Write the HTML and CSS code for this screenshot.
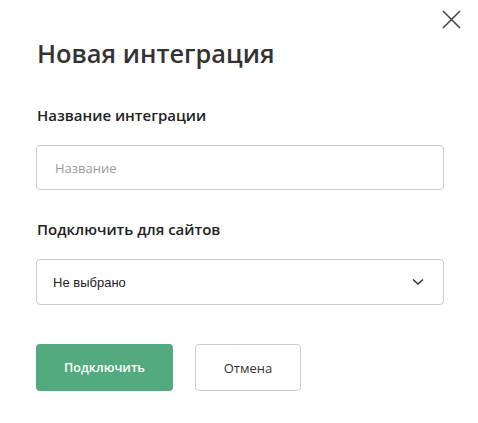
FILE: index.html
```html
<!DOCTYPE html>
<html lang="ru">
<head>
    <meta charset="UTF-8">
    <meta name="viewport" content="width=device-width, initial-scale=1.0">
    <title>Новая интеграция</title>
    <link rel="stylesheet" href="styles.css">
</head>
<body>
    <div class="modal">
        <button class="modal-close" title="Закрыть">
            <svg width="19" height="19" viewBox="0 0 19 19">
                <path d="M1 1L18 18M18 1L1 18" stroke="#444" stroke-width="1.6" fill="none"/>
            </svg>
        </button>
        <h1 class="modal-title">Новая интеграция</h1>

        <div class="field">
            <label class="field-label" for="name">Название интеграции</label>
            <input class="field-input" id="name" type="text" placeholder="Название">
        </div>

        <div class="field">
            <label class="field-label">Подключить для сайтов</label>
            <div class="select">
                <span class="select-value">Не выбрано</span>
                <svg width="12" height="8" viewBox="0 0 12 8">
                    <path d="M1 1.5L6 6L11 1.5" stroke="#333" stroke-width="1.6" fill="none"/>
                </svg>
            </div>
        </div>

        <div class="actions">
            <button class="btn btn-primary">Подключить</button>
            <button class="btn btn-secondary">Отмена</button>
        </div>
    </div>
</body>
</html>
```

FILE: styles.css
```css
body {
    margin: 0;
    padding: 0;
    background-color: #fff;
    font-family: "Open Sans", Arial, sans-serif;
    color: #222;
}

.modal {
    position: relative;
    width: 408px;
    padding: 37px 34px 0 36px;
}

.modal-close {
    position: absolute;
    top: 10px;
    right: 17px;
    background: none;
    border: none;
    padding: 0;
    cursor: pointer;
    line-height: 0;
}

.modal-title {
    margin: 0 0 36px 1px;
    font-size: 25.4px;
    line-height: 32px;
    font-weight: 600;
    color: #333;
}

.field {
    display: flex;
    flex-direction: column;
    margin-bottom: 29px;
}

.field-label {
    margin-left: 1px;
    margin-bottom: 20px;
    font-size: 15px;
    line-height: 20px;
    font-weight: 600;
    color: #222;
}

.field-input {
    box-sizing: border-box;
    height: 45px;
    padding: 0 18px;
    border: 1px solid #ccc;
    border-radius: 4px;
    font-family: "Open Sans", Arial, sans-serif;
    font-size: 13px;
    color: #333;
    outline: none;
}

.field-input::placeholder {
    color: #999;
}

.select {
    box-sizing: border-box;
    height: 46px;
    display: flex;
    align-items: center;
    justify-content: space-between;
    padding: 0 19px 0 16px;
    border: 1px solid #ccc;
    border-radius: 4px;
    cursor: pointer;
}

.select-value {
    font-family: "Liberation Sans", Arial, sans-serif;
    font-size: 13px;
    color: #222;
}

.actions {
    display: flex;
    gap: 22px;
    margin-top: 39px;
}

.btn {
    height: 47px;
    border-radius: 4px;
    font-family: "Open Sans", Arial, sans-serif;
    font-size: 13px;
    cursor: pointer;
}

.btn-primary {
    width: 137px;
    border: none;
    background-color: #52aa7e;
    color: #fff;
    font-weight: 600;
    font-size: 12.6px;
}

.btn-secondary {
    width: 106px;
    border: 1px solid #ccc;
    background-color: #fff;
    color: #333;
}
```
